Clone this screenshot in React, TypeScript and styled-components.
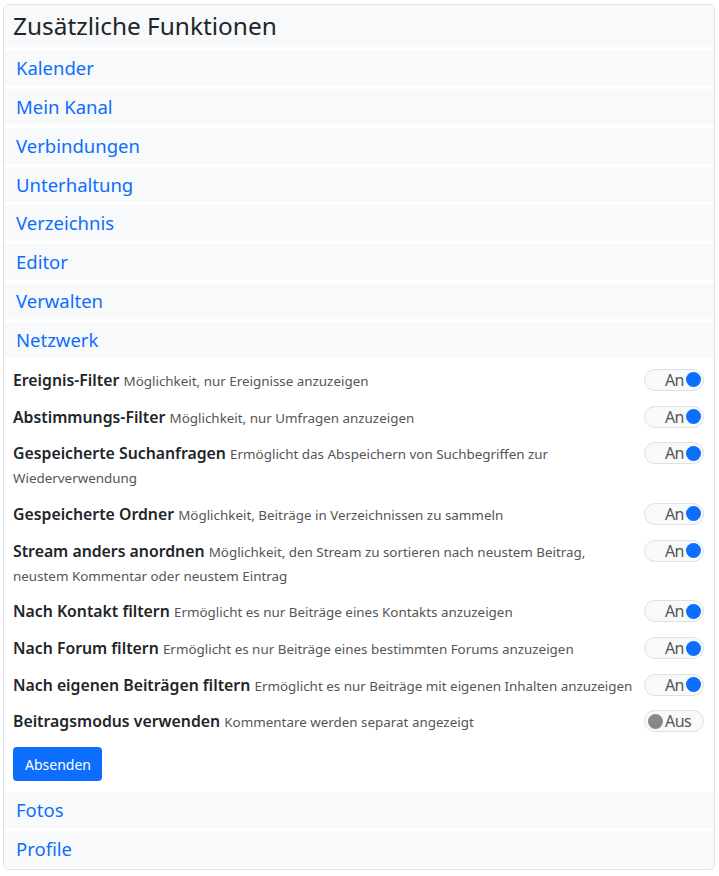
import React from "react";
import styled, { createGlobalStyle } from "styled-components";

const GlobalStyle = createGlobalStyle`
  html, body { margin: 0; padding: 0; background: #fff; }
  body { font-family: "Noto Sans", "Open Sans", sans-serif; color: #212529; }
  * { box-sizing: border-box; }
`;

const Page = styled.div`
  padding: 4px 4px 4px 3px;
`;

const Card = styled.div`
  border: 1px solid #dee2e6;
  border-radius: 6px;
  background: #fff;
  overflow: hidden;
  display: flex;
  flex-direction: column;
  gap: 3px;
  padding-bottom: 2px;
`;

const Header = styled.div`
  background: #f8f9fa;
  padding: 6px 9px 7px;
  font-size: 24.4px;
  line-height: 29px;
  font-weight: 400;
  color: #212529;
`;

const SectionRow = styled.div`
  background: #f8f9fa;
  height: 35.86px;
  display: flex;
  align-items: center;
  padding: 0 12px;
`;

const SectionLink = styled.a`
  color: #0d6efd;
  font-size: 18.5px;
  line-height: 22px;
  text-decoration: none;
  cursor: pointer;
`;

const Body = styled.div`
  padding: 7px 10px 8px 9px;
  display: flex;
  flex-direction: column;
`;

const FeatureRow = styled.div`
  display: flex;
  align-items: flex-start;
  justify-content: space-between;
  gap: 4px;
  margin-bottom: 12.7px;
`;

const FeatureText = styled.div`
  flex: 1;
  font-size: 16px;
  line-height: 24px;
`;

const Label = styled.span`
  font-weight: 600;
  font-size: 15.8px;
  line-height: 1;
  color: #212529;
`;

const Desc = styled.span`
  font-size: 13.4px;
  line-height: 1;
  color: #555;
`;

const Toggle = styled.div<{ $on: boolean }>`
  flex-shrink: 0;
  width: 60px;
  height: 22px;
  margin-top: 1px;
  border: 1px solid #dee2e6;
  border-radius: 11px;
  background: #f8f9fa;
  display: flex;
  align-items: center;
  flex-direction: ${(p) => (p.$on ? "row" : "row-reverse")};
  justify-content: flex-end;
  padding: 0 2px 0 3px;
  gap: 2px;
`;

const ToggleText = styled.span`
  font-size: 16px;
  line-height: 20px;
  color: #555;
  letter-spacing: -0.5px;
`;

const Dot = styled.span<{ $on: boolean }>`
  width: 15px;
  height: 15px;
  border-radius: 50%;
  background: ${(p) => (p.$on ? "#0d6efd" : "#888")};
`;

const SubmitButton = styled.button`
  align-self: flex-start;
  background: #0d6efd;
  color: #fff;
  border: none;
  border-radius: 4px;
  font-family: inherit;
  font-size: 14px;
  line-height: 21px;
  padding: 6px 12px;
  width: 89px;
  height: 34px;
  margin-top: 1px;
  margin-bottom: 0;
  cursor: pointer;
`;

const sectionsBefore = [
  "Kalender",
  "Mein Kanal",
  "Verbindungen",
  "Unterhaltung",
  "Verzeichnis",
  "Editor",
  "Verwalten",
  "Netzwerk",
];

const sectionsAfter = ["Fotos", "Profile"];

const features: { label: string; desc: string; on: boolean }[] = [
  { label: "Ereignis-Filter", desc: "Möglichkeit, nur Ereignisse anzuzeigen", on: true },
  { label: "Abstimmungs-Filter", desc: "Möglichkeit, nur Umfragen anzuzeigen", on: true },
  {
    label: "Gespeicherte Suchanfragen",
    desc: "Ermöglicht das Abspeichern von Suchbegriffen zur Wiederverwendung",
    on: true,
  },
  { label: "Gespeicherte Ordner", desc: "Möglichkeit, Beiträge in Verzeichnissen zu sammeln", on: true },
  {
    label: "Stream anders anordnen",
    desc: "Möglichkeit, den Stream zu sortieren nach neustem Beitrag, neustem Kommentar oder neustem Eintrag",
    on: true,
  },
  { label: "Nach Kontakt filtern", desc: "Ermöglicht es nur Beiträge eines Kontakts anzuzeigen", on: true },
  { label: "Nach Forum filtern", desc: "Ermöglicht es nur Beiträge eines bestimmten Forums anzuzeigen", on: true },
  {
    label: "Nach eigenen Beiträgen filtern",
    desc: "Ermöglicht es nur Beiträge mit eigenen Inhalten anzuzeigen",
    on: true,
  },
  { label: "Beitragsmodus verwenden", desc: "Kommentare werden separat angezeigt", on: false },
];

export default function App() {
  return (
    <>
      <GlobalStyle />
      <Page>
        <Card>
          <Header>Zusätzliche Funktionen</Header>
          {sectionsBefore.map((s) => (
            <SectionRow key={s}>
              <SectionLink>{s}</SectionLink>
            </SectionRow>
          ))}
          <Body>
            {features.map((f) => (
              <FeatureRow key={f.label}>
                <FeatureText>
                  <Label>{f.label}</Label> <Desc>{f.desc}</Desc>
                </FeatureText>
                <Toggle $on={f.on}>
                  <ToggleText>{f.on ? "An" : "Aus"}</ToggleText>
                  <Dot $on={f.on} />
                </Toggle>
              </FeatureRow>
            ))}
            <SubmitButton>Absenden</SubmitButton>
          </Body>
          {sectionsAfter.map((s) => (
            <SectionRow key={s}>
              <SectionLink>{s}</SectionLink>
            </SectionRow>
          ))}
        </Card>
      </Page>
    </>
  );
}
